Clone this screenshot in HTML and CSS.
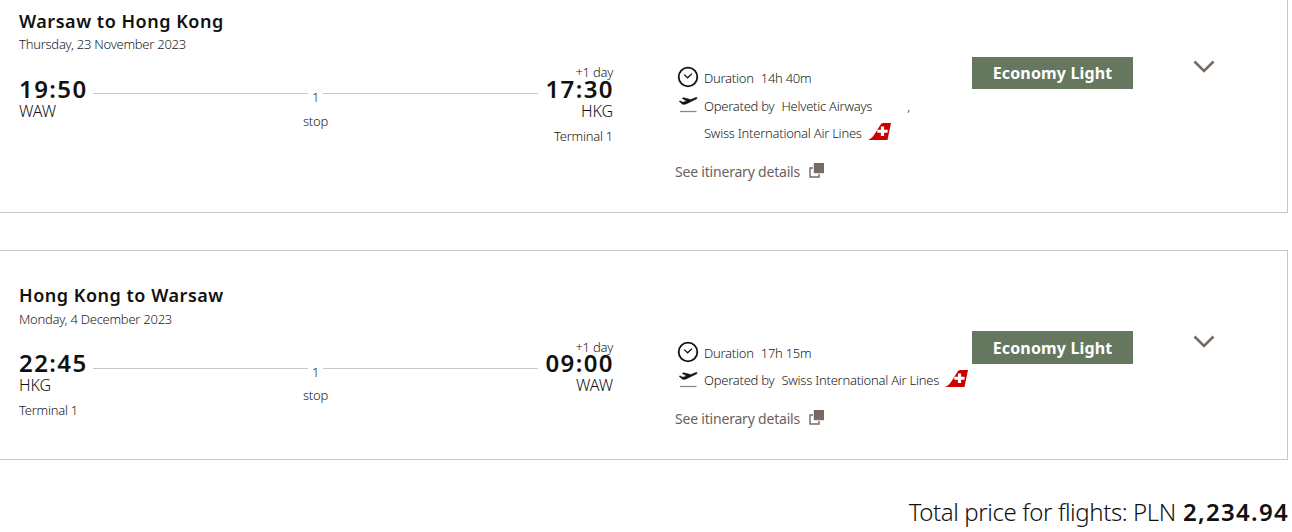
FILE: index.html
```html
<!DOCTYPE html>
<html lang="en">
<head>
<meta charset="utf-8">
<title>Flights</title>
<link rel="stylesheet" href="styles.css">
</head>
<body>
<svg class="defs" width="0" height="0">
  <symbol id="clock" viewBox="0 0 22 22"><circle cx="11" cy="11" r="9.3" fill="none" stroke="#111" stroke-width="1.8"/><path d="M7.200 8.600l3.400 3.200 4.400-4.200" fill="none" stroke="#111" stroke-width="1.300"/></symbol>
  <symbol id="plane" viewBox="0 0 20 18"><path d="M1 5.200l1.400-.3 2.300 1.300 3.900-1.100L4 2.300l1.900-.6 7 1.900L17 1.800c1-.5 2-.5 2.200-.1.2.5-.5 1.100-1.400 1.600L9.300 7.400c-1.800.9-3.300 1.200-4.800.9z" fill="#111" stroke="#111" stroke-width=".4"/><path d="M2 15.500h16.500" stroke="#8a8a8a" stroke-width="1.300"/></symbol>
  <symbol id="swiss" viewBox="0 0 23 17"><path d="M0 17C3.500 15.500 5.500 13 7 10.500L12 2.500C13 .8 13.800 0 15.500 0H23l-3.500 17z" fill="#cc0000"/><path d="M12.900 3.600h3.200v3.100h3.500v3.100h-3.500v3.100h-3.200V9.800H9.300V6.700h3.600z" fill="#fff"/></symbol>
  <symbol id="popup" viewBox="0 0 15 15"><path d="M4 5H1v9h9v-3" fill="none" stroke="#766a62" stroke-width="1.400"/><path d="M4.800 0H15v10.200H4.800z" fill="#766a62"/></symbol>
  <symbol id="chevron" viewBox="0 0 22 14"><path d="M1.500 1.500L11 11l9.500-9.500" fill="none" stroke="#766a62" stroke-width="2.600"/></symbol>
</svg>

<section class="card card-first">
  <div class="route">
    <h2 class="title">Warsaw to Hong Kong</h2>
    <p class="date">Thursday, 23 November 2023</p>
    <div class="leg">
      <div class="stop-point depart">
        <span class="time">19:50</span>
        <span class="code">WAW</span>
      </div>
      <div class="track">
        <i class="line"></i><span class="count">1</span><i class="line"></i>
        <span class="stops">stop</span>
      </div>
      <div class="stop-point arrive">
        <span class="plus">+1 day</span>
        <span class="time">17:30</span>
        <span class="code">HKG</span>
        <span class="terminal">Terminal 1</span>
      </div>
    </div>
  </div>
  <div class="info">
    <div class="row"><svg class="ico-clock"><use href="#clock"/></svg><span class="label">Duration</span><span class="dur">14h 40m</span></div>
    <div class="row"><svg class="ico-plane"><use href="#plane"/></svg><span class="label">Operated by</span><span>Helvetic Airways</span><span class="comma">,</span></div>
    <div class="row row-next"><span>Swiss International Air Lines</span><svg class="ico-swiss"><use href="#swiss"/></svg></div>
    <a class="details">See itinerary details<svg class="ico-popup"><use href="#popup"/></svg></a>
  </div>
  <div class="fare">Economy Light</div>
  <svg class="ico-chevron"><use href="#chevron"/></svg>
</section>

<section class="card card-second">
  <div class="route">
    <h2 class="title">Hong Kong to Warsaw</h2>
    <p class="date">Monday, 4 December 2023</p>
    <div class="leg">
      <div class="stop-point depart">
        <span class="time">22:45</span>
        <span class="code">HKG</span>
        <span class="terminal">Terminal 1</span>
      </div>
      <div class="track">
        <i class="line"></i><span class="count">1</span><i class="line"></i>
        <span class="stops">stop</span>
      </div>
      <div class="stop-point arrive">
        <span class="plus">+1 day</span>
        <span class="time">09:00</span>
        <span class="code">WAW</span>
      </div>
    </div>
  </div>
  <div class="info">
    <div class="row"><svg class="ico-clock"><use href="#clock"/></svg><span class="label">Duration</span><span class="dur">17h 15m</span></div>
    <div class="row"><svg class="ico-plane"><use href="#plane"/></svg><span class="label">Operated by</span><span>Swiss International Air Lines</span><svg class="ico-swiss"><use href="#swiss"/></svg></div>
    <a class="details">See itinerary details<svg class="ico-popup"><use href="#popup"/></svg></a>
  </div>
  <div class="fare">Economy Light</div>
  <svg class="ico-chevron"><use href="#chevron"/></svg>
</section>

<p class="total"><span class="total-label">Total price for flights: PLN</span><b class="amount">2,234.94</b></p>
</body>
</html>
```
FILE: styles.css
```css
* { box-sizing: border-box; }
body {
  margin: 0;
  height: 532px;
  overflow: hidden;
  background: #fff;
  color: #222;
  font: 300 13px/20px "Noto Sans", "Open Sans", sans-serif;
  letter-spacing: -0.25px;
  white-space: nowrap;
}
h2, p { margin: 0; }
svg { flex-shrink: 0; }
.defs { display: block; }
.card {
  display: grid;
  grid-template-columns: 594px 359px 161px 82px;
  align-items: start;
  width: 1288px;
  padding-left: 19px;
  border-right: 1px solid #c8c8c8;
  border-bottom: 1px solid #c8c8c8;
}
.card-first { height: 213px; padding-top: 9px; }
.card-second { height: 210px; margin-top: 37px; padding-top: 32px; border-top: 1px solid #c8c8c8; }
.title {
  color: #111;
  font-size: 18px;
  font-weight: 600;
  line-height: 24px;
  letter-spacing: 0.52px;
}
.date { margin-top: 1px; }
.card-second .date { margin-top: 2px; }
.leg { display: grid; grid-template-columns: 74px 445px 75px; margin-top: 10px; }
.stop-point { display: flex; flex-direction: column; }
.depart { padding-top: 15px; }
.arrive { align-items: flex-end; }
.plus { line-height: 16px; }
.time {
  color: #111;
  font-size: 24px;
  font-weight: 600;
  line-height: 20px;
  letter-spacing: 1.4px;
}
.arrive .time { margin: -1px -1px 0 0; }
.card-second .time { position: relative; top: -0.6px; }
.code { margin-top: 1px; color: #111; font-size: 16px; line-height: 22px; letter-spacing: -0.1px; }
.terminal { margin-top: 4px; }
.card-second .code { margin-top: 0; }
.track {
  display: grid;
  grid-template-columns: 1fr 15px 1fr;
  justify-items: center;
  align-content: start;
  row-gap: 4px;
  padding-top: 23px;
}
.card-second .track { row-gap: 3px; }
.line { width: 100%; height: 1px; margin-top: 6px; background: #c8c8c8; }
.stops { grid-column: 1 / -1; }
.info { padding: 55px 0 0 62px; }
.card-second .info { padding-top: 56px; }
.row { display: flex; align-items: center; height: 27.4px; }
.card-first .row:first-child { height: 28px; }
.label { margin-right: 7px; }
.ico-clock { width: 22px; height: 22px; margin: -2px 5px 0 2px; }
.ico-plane { width: 20px; height: 18px; margin: -1px 6px 0 3px; }
.ico-swiss { width: 23px; height: 17px; margin: -4px 0 0 6px; }
.comma { margin-left: 35px; }
.row-next { padding-left: 29px; }
.details {
  display: flex;
  align-items: center;
  margin-top: 15.5px;
  color: #6b615b;
  font-size: 14px;
  font-weight: 400;
  line-height: 20px;
  letter-spacing: -0.2px;
}
.card-first .details { margin-top: 15px; }
.ico-popup { width: 15px; height: 15px; margin: -3px 0 0 9px; }
.fare {
  margin-top: 48px;
  height: 32px;
  background: #65785f;
  color: #fff;
  font-size: 16px;
  font-weight: 700;
  line-height: 32px;
  letter-spacing: 0.15px;
  text-align: center;
}
.card-second .fare { height: 33px; line-height: 34px; }
.ico-chevron { width: 22px; height: 14px; margin: 51px 0 0 60px; }
.card-second .ico-chevron { margin-top: 52px; }
.total {
  display: flex;
  justify-content: flex-end;
  gap: 7px;
  width: 1289px;
  padding-top: 36px;
  color: #111;
  font-size: 24px;
  line-height: 32px;
}
.total-label { letter-spacing: -0.4px; }
.amount { font-weight: 600; letter-spacing: 1.3px; }
```
